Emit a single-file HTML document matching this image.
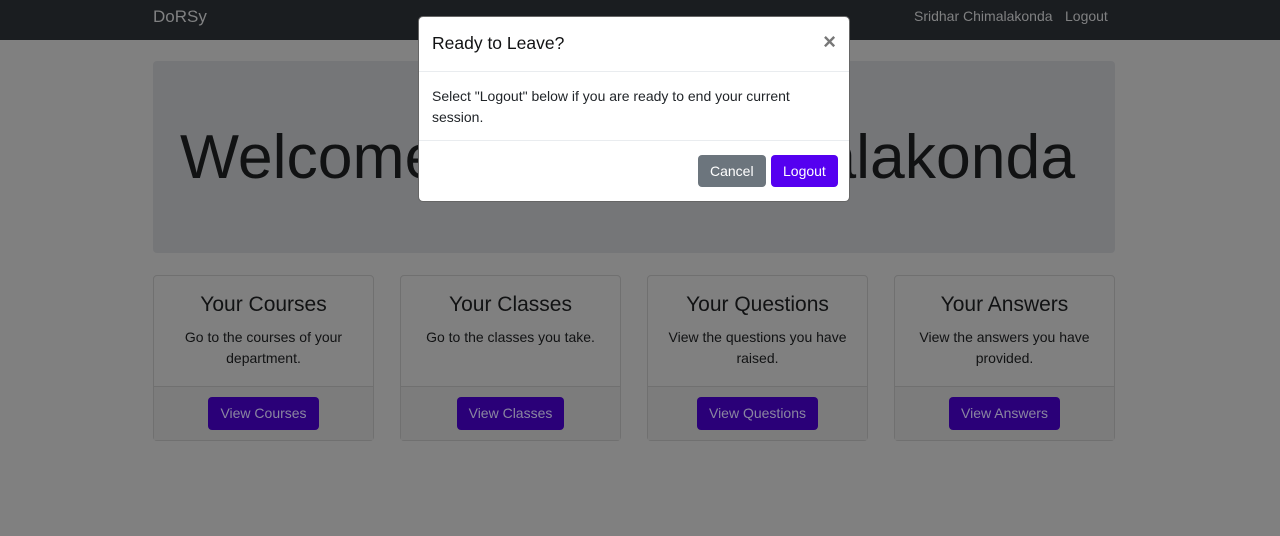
<!DOCTYPE html>
<html><head><meta charset="utf-8"><style>
*{box-sizing:border-box;margin:0;padding:0}
body{width:1280px;height:536px;overflow:hidden;background:#808080;font-family:"Liberation Sans",sans-serif;color:#111213;position:relative}
.nav{position:absolute;left:0;top:0;width:1280px;height:40px;background:#1a1d20}
.nav span{position:absolute;color:#808182}
.jumbo{position:absolute;left:153px;top:61px;width:962px;height:192px;background:#757678;border-radius:4px}
.jumbo h1{position:absolute;left:27px;top:59px;font-size:62.5px;font-weight:300;white-space:nowrap;line-height:1.2}
.card{position:absolute;top:275px;width:221px;height:166px;border:1px solid #707070;border-radius:4px;text-align:center}
.card h3{font-size:21px;font-weight:400;margin-top:17px}
.card p{font-size:14px;line-height:21px;margin:10px 18px 0}
.card .f{position:absolute;left:0;right:0;top:110px;bottom:0;background:#7c7c7c;border-top:1px solid #707070}
.btn{display:inline-block;background:#2a0078;color:#8a86a0;font-size:14px;border-radius:4px;padding:0 12px;height:33px;line-height:33px;margin-top:10px}
.modal{position:absolute;left:418px;top:16px;width:432px;height:186px;background:#fff;border-radius:5px;border:1px solid #666}
.mh{height:55px;border-bottom:1px solid #e9ecef;position:relative}
.mh h5{position:absolute;left:13px;top:16px;font-size:17.5px;font-weight:400}
.mh .x{position:absolute;right:13px;top:12px;font-size:22px;font-weight:700;color:#777}
.mb{height:69px;border-bottom:1px solid #e9ecef;padding:14px 13px;font-size:14px;line-height:21px;color:#212529}
.mf{position:relative}
.mf .b{position:absolute;top:14px;height:32px;line-height:32px;color:#fff;font-size:14px;border-radius:4px;padding:0 12px}
</style></head><body>
<div class="nav"><span style="left:153px;top:7px;font-size:17px">DoRSy</span><span style="left:914px;top:8px;font-size:14px">Sridhar Chimalakonda</span><span style="left:1065px;top:8px;font-size:14px">Logout</span></div>
<div class="jumbo"><h1>Welcome Sridhar Chimalakonda</h1></div>
<div class="card" style="left:153px"><h3>Your Courses</h3><p>Go to the courses of your department.</p><div class="f"><span class="btn">View Courses</span></div></div>
<div class="card" style="left:400px"><h3>Your Classes</h3><p>Go to the classes you take.</p><div class="f"><span class="btn">View Classes</span></div></div>
<div class="card" style="left:647px"><h3>Your Questions</h3><p>View the questions you have raised.</p><div class="f"><span class="btn">View Questions</span></div></div>
<div class="card" style="left:894px"><h3>Your Answers</h3><p>View the answers you have provided.</p><div class="f"><span class="btn">View Answers</span></div></div>
<div class="modal">
<div class="mh"><h5>Ready to Leave?</h5><span class="x">×</span></div>
<div class="mb">Select "Logout" below if you are ready to end your current session.</div>
<div class="mf"><span class="b" style="left:279px;background:#6c757d">Cancel</span><span class="b" style="left:352px;background:#5500f0">Logout</span></div>
</div>
</body></html>
